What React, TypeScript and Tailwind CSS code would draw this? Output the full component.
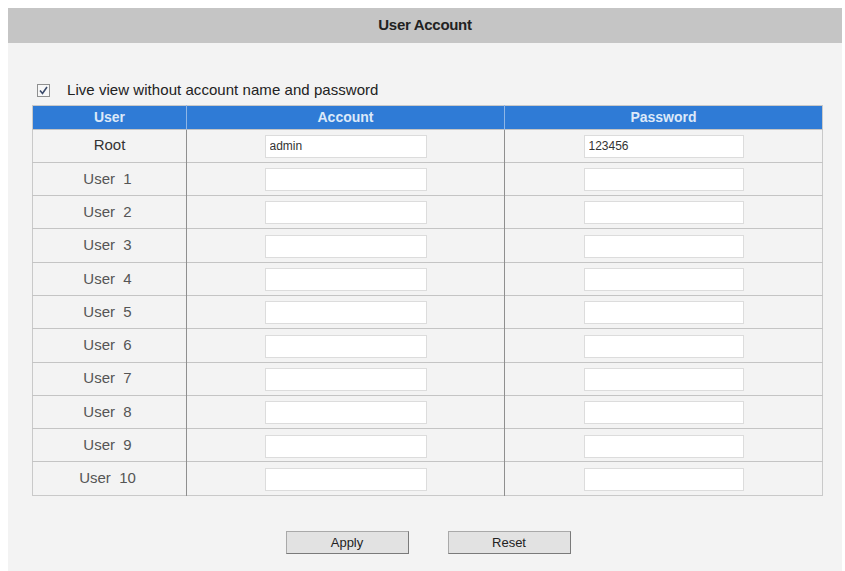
import { useState } from "react";

const users = ["User  1", "User  2", "User  3", "User  4", "User  5", "User  6", "User  7", "User  8", "User  9", "User  10"];

export default function App() {
  const [liveView, setLiveView] = useState(true);

  return (
    <div className="h-[571px] w-[845px] bg-white pl-2 pr-[3px] pt-2 font-['Liberation_Sans',Arial,sans-serif]">
      <div className="flex h-full flex-col bg-[#f3f3f3]">
        {/* Title bar */}
        <div className="flex h-[35px] items-center justify-center bg-[#c5c5c5] text-[15px] font-bold tracking-[-0.3px] text-[#222]">
          User Account
        </div>

        <div className="flex flex-col px-6 pt-[36px]">
          <label
            className="flex cursor-pointer items-center gap-[17px] pl-[5px] text-[15px] tracking-[0.05px] text-[#222]"
            onClick={() => setLiveView(!liveView)}
          >
            <span className="flex h-[13px] w-[13px] items-center justify-center border border-[#8e8f8f] bg-[#f7f7f7]">
              {liveView && (
                <svg viewBox="0 0 11 11" className="h-[11px] w-[11px]">
                  <path d="M2 5.5 L4.5 8.5 L9 2" fill="none" stroke="#3a4a6a" strokeWidth="1.6" />
                </svg>
              )}
            </span>
            Live view without account name and password
          </label>

          <table className="mt-[3px] w-[791px] border-collapse border border-[#c9c9c9] text-center">
            <thead>
              <tr className="h-[24px] bg-[#2f7bd6] text-[14px] font-bold text-[#dce9f9]">
                <th className="w-[154px] border-r border-[#8fb6e6] font-bold">User</th>
                <th className="w-[318px] border-r border-[#8fb6e6] font-bold">Account</th>
                <th className="font-bold">Password</th>
              </tr>
            </thead>
            <tbody>
              <Row label="Root" account="admin" password="123456" root />
              {users.map((u) => (
                <Row key={u} label={u} />
              ))}
            </tbody>
          </table>

          <div className="mt-[35px] flex justify-center gap-[39px] pl-[6px]">
            <button className="h-[23px] w-[123px] border border-[#a9a9a9] border-b-[#7a7a7a] border-r-[#7a7a7a] bg-[#e2e2e2] text-[13px] text-[#222]">
              Apply
            </button>
            <button className="h-[23px] w-[123px] border border-[#a9a9a9] border-b-[#7a7a7a] border-r-[#7a7a7a] bg-[#e2e2e2] text-[13px] text-[#222]">
              Reset
            </button>
          </div>
        </div>
      </div>
    </div>
  );
}

function Row({ label, account = "", password = "", root = false }: { label: string; account?: string; password?: string; root?: boolean }) {
  return (
    <tr className="h-[33.3px] border-t border-[#c4c4c4]">
      <td className={`whitespace-pre border-r border-[#8f8f8f] text-[15px] ${root ? "text-[#333]" : "pr-[4px] text-[#555]"}`}>
        {label}
      </td>
      <td className="border-r border-[#8f8f8f]">
        <input
          defaultValue={account}
          className="h-[23px] w-[162px] border border-[#dcdcdc] bg-white px-1 text-[12px] text-[#333] outline-none"
        />
      </td>
      <td>
        <input
          defaultValue={password}
          className="h-[23px] w-[160px] border border-[#dcdcdc] bg-white px-1 text-[12px] text-[#333] outline-none"
        />
      </td>
    </tr>
  );
}
